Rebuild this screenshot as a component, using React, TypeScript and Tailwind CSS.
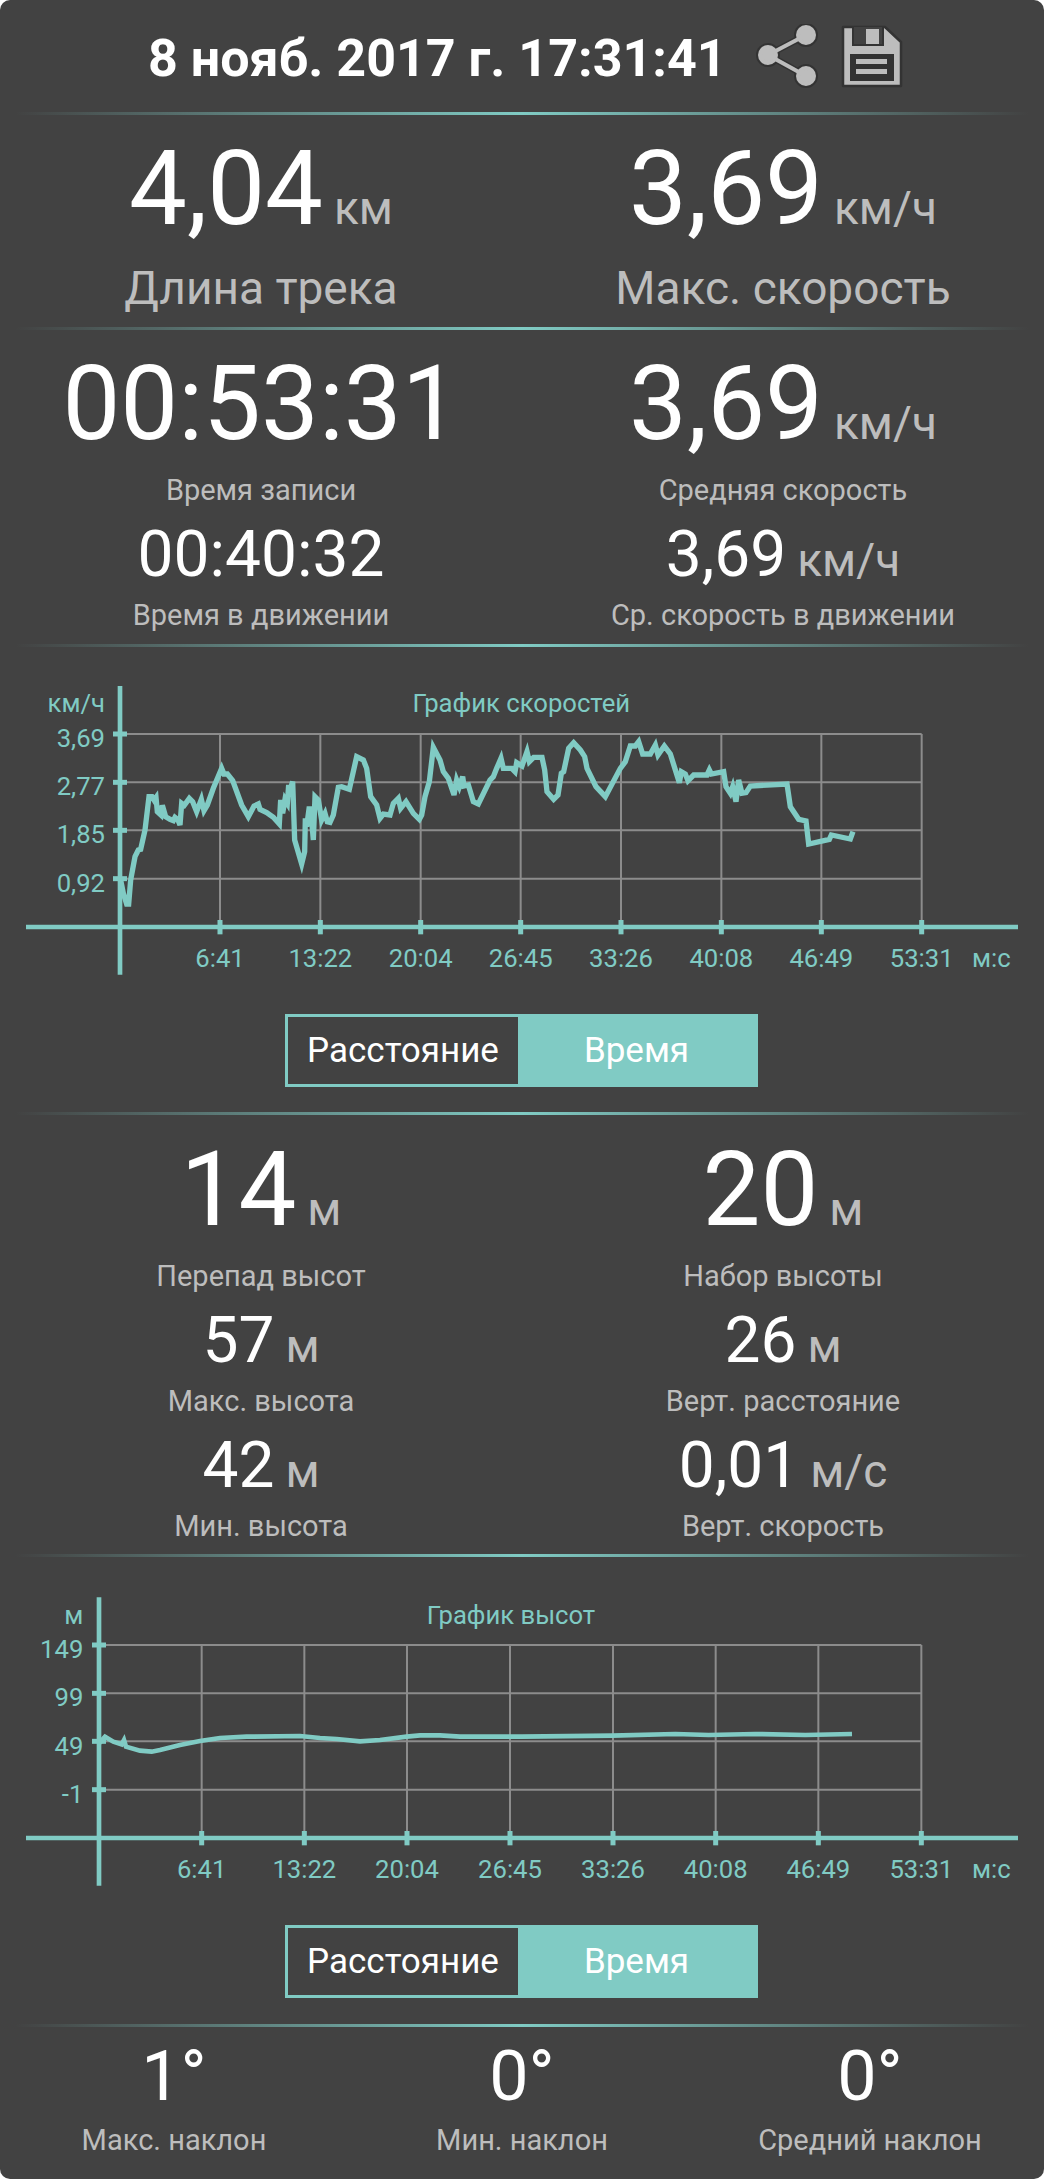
import React from "react";

const TEAL = "#80cbc4";

// chart coordinates are in a 3x viewBox (3132 x 1020 -> 1044 x 340)
const speedLine = "362,660 370,700 380,732 386,732 392,660 405,590 415,570 422,568 435,510 447,410 456,410 462,420 468,412 472,455 483,465 487,436 497,470 510,478 520,482 525,472 533,478 540,495 545,430 553,436 568,415 578,425 590,455 604,418 612,452 622,435 640,385 665,325 672,342 682,342 698,362 725,435 745,470 762,438 775,432 780,448 800,458 820,472 838,492 842,420 848,460 855,418 862,430 866,375 868,395 878,365 884,540 905,612 914,575 916,475 920,500 928,440 935,480 940,540 945,410 955,420 965,480 975,460 982,485 990,487 1000,465 1015,382 1025,380 1048,388 1070,290 1090,300 1100,325 1112,410 1130,435 1140,475 1150,462 1170,465 1180,430 1195,415 1202,445 1218,425 1240,460 1258,478 1265,465 1275,410 1288,365 1300,262 1320,300 1330,335 1345,355 1362,405 1370,360 1378,380 1388,350 1392,378 1405,375 1420,425 1435,432 1470,360 1480,350 1490,325 1503,295 1510,325 1535,325 1545,335 1550,308 1566,318 1581,275 1588,305 1601,292 1626,292 1634,330 1641,395 1661,418 1674,405 1684,340 1691,335 1706,265 1721,248 1741,270 1754,290 1761,325 1788,380 1816,410 1861,325 1876,305 1891,258 1906,258 1916,245 1928,282 1951,282 1966,255 1974,285 1993,258 2011,282 2038,368 2044,335 2056,342 2064,362 2081,345 2121,345 2128,330 2134,342 2171,335 2178,380 2191,400 2198,380 2208,425 2216,360 2226,400 2238,398 2251,378 2361,372 2371,440 2396,478 2418,483 2426,552 2488,538 2494,525 2551,537 2559,515";
const heightLine = "297,490 315,470 340,485 365,493 372,480 378,500 420,512 455,515 480,510 540,495 600,483 660,474 740,470 900,468 960,474 1010,477 1080,484 1140,480 1220,470 1260,466 1320,466 1380,470 1566,470 1836,467 2026,462 2126,465 2266,462 2416,465 2556,462";

const timeLabels = ["6:41", "13:22", "20:04", "26:45", "33:26", "40:08", "46:49", "53:31"];

type ChartProps = {
  title: string;
  titleX: number;
  unit: string;
  line: string;
  lineWidth: number;
  axisX: number;
  axisY: number;
  axisTop: number;
  axisBottom: number;
  gridX: number[];
  gridY: number[];
  yLabels: { t: string; y: number }[];
  labelEnd: number;
  labelY: number;
  titleY: number;
};

function Chart(p: ChartProps) {
  const right = p.gridX[p.gridX.length - 1];
  return (
    <svg viewBox="0 0 3132 1020" className="block w-[1044px] h-[340px]">
      {p.gridY.map((y) => (
        <line key={y} x1={p.axisX} x2={right} y1={y} y2={y} stroke="#8c8c8c" strokeWidth="6" />
      ))}
      {p.gridX.map((x) => (
        <line key={x} x1={x} x2={x} y1={p.gridY[0]} y2={p.axisY} stroke="#8c8c8c" strokeWidth="6" />
      ))}
      <line x1="78" x2="3054" y1={p.axisY} y2={p.axisY} stroke={TEAL} strokeWidth="14" />
      <line x1={p.axisX} x2={p.axisX} y1={p.axisTop} y2={p.axisBottom} stroke={TEAL} strokeWidth="14" />
      {p.gridY.map((y) => (
        <line key={y} x1={p.axisX - 21} x2={p.axisX + 21} y1={y} y2={y} stroke={TEAL} strokeWidth="15" />
      ))}
      {p.gridX.map((x) => (
        <line key={x} x1={x} x2={x} y1={p.axisY - 21} y2={p.axisY + 22} stroke={TEAL} strokeWidth="15" />
      ))}
      <polyline points={p.line} fill="none" stroke={TEAL} strokeWidth={p.lineWidth} strokeLinejoin="miter" />
      <g fill={TEAL} fontSize="77">
        <text x={p.labelEnd} y={p.titleY} textAnchor="end">{p.unit}</text>
        <text x={p.titleX} y={p.titleY} textAnchor="middle">{p.title}</text>
        {p.yLabels.map((l) => (
          <text key={l.t} x={p.labelEnd} y={l.y} textAnchor="end">{l.t}</text>
        ))}
        {p.gridX.map((x, i) => (
          <text key={x} x={x} y={p.labelY} textAnchor="middle">{timeLabels[i]}</text>
        ))}
        <text x="2916" y={p.labelY}>м:с</text>
      </g>
    </svg>
  );
}

function Divider() {
  return <div className="h-[3px] mx-[15px] bg-gradient-to-r from-[#80cbc400] via-[#80cbc4] to-[#80cbc400]" />;
}

function Toggle() {
  return (
    <div className="ml-[285px] w-[473px] h-[73px] flex border-[3px] border-[#80cbc4] text-[35px] leading-[67px] text-white">
      <div className="w-[230px] text-center">Расстояние</div>
      <div className="flex-1 text-center bg-[#80cbc4]">Время</div>
    </div>
  );
}

function Value({ v, u, big }: { v: string; u?: string; big?: boolean }) {
  return (
    <div className="flex justify-center items-baseline gap-[11px] text-white">
      <span className={big ? "text-[103px] leading-[110px]" : "text-[64px] leading-[70px]"}>{v}</span>
      {u && <span className="text-[46px] leading-none text-[#bdbdbd]">{u}</span>}
    </div>
  );
}

function Label({ t, big, mt }: { t: string; big?: boolean; mt: string }) {
  return (
    <div className={`text-center text-[#bdbdbd] ${big ? "text-[46px] leading-[50px]" : "text-[29px] leading-[36px]"} ${mt}`}>{t}</div>
  );
}

function ShareIcon() {
  return (
    <svg viewBox="0 0 62 64" className="w-[62px] h-[64px]">
      <g stroke="#333333" strokeWidth="7" fill="#333333">
        <line x1="50" y1="11" x2="12" y2="31" />
        <line x1="12" y1="31" x2="50" y2="52" />
        <circle cx="50" cy="11" r="8.5" />
        <circle cx="12" cy="31" r="8.5" />
        <circle cx="50" cy="52" r="8.5" />
      </g>
      <g stroke="#bdbdbd" strokeWidth="4" fill="#bdbdbd">
        <line x1="50" y1="11" x2="12" y2="31" />
        <line x1="12" y1="31" x2="50" y2="52" />
        <circle cx="50" cy="11" r="8" />
        <circle cx="12" cy="31" r="8" />
        <circle cx="50" cy="52" r="8" />
      </g>
    </svg>
  );
}

function SaveIcon() {
  return (
    <svg viewBox="0 0 62 64" className="w-[62px] h-[64px]">
      <path d="M2 3 H44 L60 18 V62 H2 Z" fill="#bdbdbd" stroke="#333333" strokeWidth="2.5" strokeLinejoin="round" />
      <path d="M12 3 V21 H42 V3" fill="#424242" stroke="#333333" strokeWidth="2" />
      <rect x="25" y="5" width="13" height="15" fill="#bdbdbd" />
      <rect x="9" y="30" width="44" height="27" fill="#333333" />
      <rect x="15" y="35" width="31" height="5" fill="#bdbdbd" />
      <rect x="15" y="45" width="31" height="5" fill="#bdbdbd" />
    </svg>
  );
}

export default function App() {
  return (
    <div className="w-[1044px] h-[2179px] bg-white overflow-hidden font-[Roboto,sans-serif]">
      <div className="h-full rounded-[10px] bg-[#424242]">
        <div className="h-[112px] pl-[148px] flex items-center text-white">
          <span className="text-[52px] font-bold leading-none mt-[5px]">8 нояб. 2017 г. 17:31:41</span>
          <div className="flex gap-[23px] ml-[29px] mt-[-1px]">
            <ShareIcon />
            <SaveIcon />
          </div>
        </div>
        <Divider />

        <div className="h-[212px] pt-[19px] grid grid-cols-2">
          <div>
            <Value v="4,04" u="км" big />
            <Label t="Длина трека" big mt="mt-[19px]" />
          </div>
          <div>
            <Value v="3,69" u="км/ч" big />
            <Label t="Макс. скорость" big mt="mt-[19px]" />
          </div>
        </div>
        <Divider />

        <div className="h-[314px] pt-[19px] grid grid-cols-2">
          <div>
            <Value v="00:53:31" big />
            <Label t="Время записи" mt="mt-[13px]" />
            <div className="mt-[12px]"><Value v="00:40:32" /></div>
            <Label t="Время в движении" mt="mt-[7px]" />
          </div>
          <div>
            <Value v="3,69" u="км/ч" big />
            <Label t="Средняя скорость" mt="mt-[13px]" />
            <div className="mt-[12px]"><Value v="3,69" u="км/ч" /></div>
            <Label t="Ср. скорость в движении" mt="mt-[7px]" />
          </div>
        </div>
        <Divider />

        <div className="h-[465px] pt-[13px]">
          <Chart
            title="График скоростей"
            titleX={1564}
            titleY={157}
            unit="км/ч"
            line={speedLine}
            lineWidth={16}
            axisX={360}
            axisY={801}
            axisTop={78}
            axisBottom={944}
            gridX={[660, 961, 1262, 1562, 1863, 2164, 2464, 2765]}
            gridY={[222, 367, 511, 656]}
            yLabels={[
              { t: "3,69", y: 262 },
              { t: "2,77", y: 405 },
              { t: "1,85", y: 550 },
              { t: "0,92", y: 695 },
            ]}
            labelEnd={315}
            labelY={922}
          />
          <div className="mt-[14px]"><Toggle /></div>
        </div>
        <Divider />

        <div className="h-[439px] pt-[20px] grid grid-cols-2">
          <div>
            <Value v="14" u="м" big />
            <Label t="Перепад высот" mt="mt-[13px]" />
            <div className="mt-[12px]"><Value v="57" u="м" /></div>
            <Label t="Макс. высота" mt="mt-[7px]" />
            <div className="mt-[12px]"><Value v="42" u="м" /></div>
            <Label t="Мин. высота" mt="mt-[7px]" />
          </div>
          <div>
            <Value v="20" u="м" big />
            <Label t="Набор высоты" mt="mt-[13px]" />
            <div className="mt-[12px]"><Value v="26" u="м" /></div>
            <Label t="Верт. расстояние" mt="mt-[7px]" />
            <div className="mt-[12px]"><Value v="0,01" u="м/с" /></div>
            <Label t="Верт. скорость" mt="mt-[7px]" />
          </div>
        </div>
        <Divider />

        <div className="h-[467px] pt-[23px]">
          <Chart
            title="График высот"
            titleX={1533}
            titleY={132}
            unit="м"
            line={heightLine}
            lineWidth={14}
            axisX={297}
            axisY={774}
            axisTop={52}
            axisBottom={917}
            gridX={[605, 913, 1221, 1530, 1839, 2147, 2455, 2764]}
            gridY={[195, 340, 484, 629]}
            yLabels={[
              { t: "149", y: 235 },
              { t: "99", y: 378 },
              { t: "49", y: 524 },
              { t: "-1", y: 668 },
            ]}
            labelEnd={250}
            labelY={895}
          />
          <div className="mt-[5px]"><Toggle /></div>
        </div>
        <Divider />

        <div className="pt-[9px] grid grid-cols-3">
          {[
            { v: "1°", t: "Макс. наклон" },
            { v: "0°", t: "Мин. наклон" },
            { v: "0°", t: "Средний наклон" },
          ].map((m) => (
            <div key={m.t}>
              <div className="text-center text-white text-[70px] leading-[80px]">{m.v}</div>
              <Label t={m.t} mt="mt-[6px]" />
            </div>
          ))}
        </div>
      </div>
    </div>
  );
}
